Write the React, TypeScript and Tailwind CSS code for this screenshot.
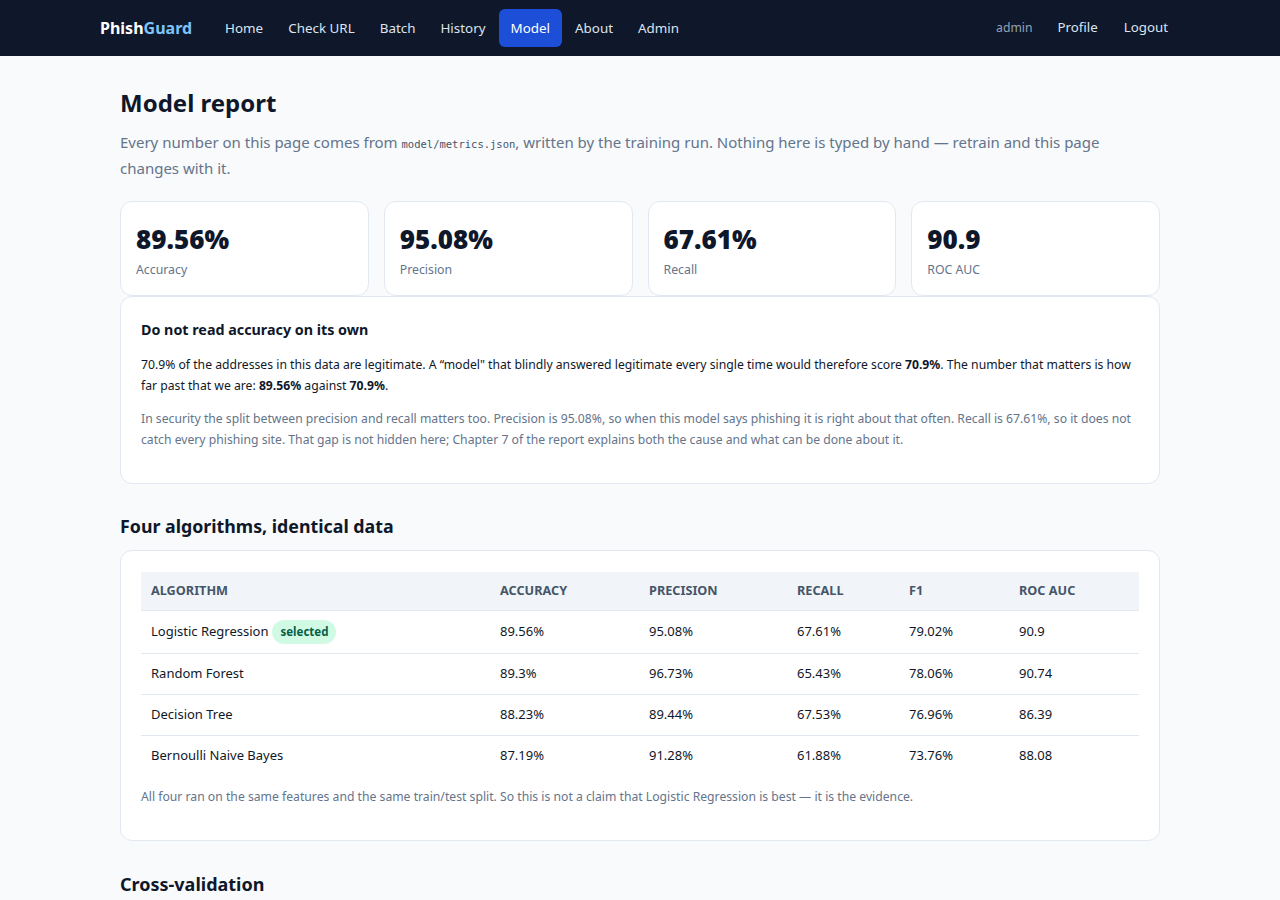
import React from "react";

const navLinks = ["Home", "Check URL", "Batch", "History", "Model", "About", "Admin"];

const metrics = [
  { value: "89.56%", label: "Accuracy" },
  { value: "95.08%", label: "Precision" },
  { value: "67.61%", label: "Recall" },
  { value: "90.9", label: "ROC AUC" },
];

const rows = [
  { name: "Logistic Regression", selected: true, acc: "89.56%", prec: "95.08%", rec: "67.61%", f1: "79.02%", auc: "90.9" },
  { name: "Random Forest", acc: "89.3%", prec: "96.73%", rec: "65.43%", f1: "78.06%", auc: "90.74" },
  { name: "Decision Tree", acc: "88.23%", prec: "89.44%", rec: "67.53%", f1: "76.96%", auc: "86.39" },
  { name: "Bernoulli Naive Bayes", acc: "87.19%", prec: "91.28%", rec: "61.88%", f1: "73.76%", auc: "88.08" },
];

export default function App() {
  return (
    <div className="min-h-screen bg-[#f8fafc] text-[#0f172a] font-['Noto_Sans',sans-serif]">
      {/* top nav */}
      <nav className="bg-[#0f172a] h-14">
        <div className="max-w-[1080px] mx-auto h-full flex items-center">
          <div className="text-[16px] font-bold mr-[21px]">
            <span className="text-white">Phish</span>
            <span className="text-[#7cc4fa]">Guard</span>
          </div>
          <div className="flex items-center gap-[1px]">
            {navLinks.map((l) => (
              <a
                key={l}
                className={
                  l === "Model"
                    ? "px-3 h-[38px] flex items-center rounded-md bg-[#1d4ed8] text-white text-[13.4px]"
                    : "px-3 h-[38px] flex items-center rounded-md text-[#dbe4f0] text-[13.4px]"
                }
              >
                {l}
              </a>
            ))}
          </div>
          <div className="ml-auto flex items-center">
            <span className="text-[#94a3b8] text-[12.2px] mr-[13px]">admin</span>
            <a className="px-3 py-2 text-[#dbe4f0] text-[13.3px]">Profile</a>
            <a className="ml-[2px] px-3 py-2 text-[#dbe4f0] text-[13.3px]">Logout</a>
          </div>
        </div>
      </nav>

      <main className="max-w-[1040px] mx-auto pt-[29px]">
        <h1 className="text-[24px] font-bold leading-[36px]">Model report</h1>
        <p className="mt-[8px] text-[15px] leading-[26px] text-[#64748b]">
          Every number on this page comes from{" "}
          <code className="font-['DejaVu_Sans_Mono',monospace] text-[10.5px] leading-none text-[#475569]">
            model/metrics.json
          </code>
          , written by the training run. Nothing here is typed by hand — retrain and this page changes with it.
        </p>

        <div className="grid grid-cols-4 gap-[15px] mt-[20px]">
          {metrics.map((m) => (
            <div key={m.label} className="bg-white border border-[#e2e8f0] rounded-xl px-[15px] pt-[20px] pb-[15px] h-[95px]">
              <div className="text-[26px] font-black leading-[34px] text-[#0f172a]">{m.value}</div>
              <div className="text-[12.3px] text-[#64748b] mt-[5px]">{m.label}</div>
            </div>
          ))}
        </div>

        <div className="bg-white border border-[#e2e8f0] rounded-xl px-[20px] pt-[22px] pb-[33px]">
          <h3 className="text-[14.3px] font-bold leading-[22px]">Do not read accuracy on its own</h3>
          <p className="mt-[13px] text-[12.2px] leading-[21px] text-[#0f172a]">
            70.9% of the addresses in this data are legitimate. A “model" that blindly answered legitimate every single
            time would therefore score <b>70.9%</b>. The number that matters is how far past that we are:{" "}
            <b>89.56%</b> against <b>70.9%</b>.
          </p>
          <p className="mt-[12px] text-[12.2px] leading-[21px] text-[#64748b]">
            In security the split between precision and recall matters too. Precision is 95.08%, so when this model says
            phishing it is right about that often. Recall is 67.61%, so it does not catch every phishing site. That gap is
            not hidden here; Chapter 7 of the report explains both the cause and what can be done about it.
          </p>
        </div>

        <h2 className="mt-[28px] text-[17.8px] font-bold leading-[28px]">Four algorithms, identical data</h2>
        <div className="mt-[10px] bg-white border border-[#e2e8f0] rounded-xl px-[20px] pt-[21px] pb-[33px]">
          <table className="w-full text-[13px] border-collapse">
            <thead>
              <tr className="bg-[#f1f5f9] text-[#475569] text-left text-[12.7px]">
                <th className="w-[349px] px-[10px] h-[38px] font-bold">ALGORITHM</th>
                <th className="w-[149px] px-[10px] font-bold">ACCURACY</th>
                <th className="w-[148px] px-[10px] font-bold">PRECISION</th>
                <th className="w-[112px] px-[10px] font-bold">RECALL</th>
                <th className="w-[110px] px-[10px] font-bold">F1</th>
                <th className="px-[10px] font-bold">ROC AUC</th>
              </tr>
            </thead>
            <tbody>
              {rows.map((r, i) => (
                <tr key={r.name} className="border-t border-[#e2e8f0]">
                  <td className={i === 0 ? "px-[10px] h-[43px]" : "px-[10px] h-[41px]"}>
                    {r.name}
                    {r.selected && (
                      <span className="ml-[4px] inline-block rounded-full bg-[#d1fae5] text-[#065f46] text-[11.5px] font-bold px-[8px] py-[2px] leading-[20px]">
                        selected
                      </span>
                    )}
                  </td>
                  <td className="px-[10px]">{r.acc}</td>
                  <td className="px-[10px]">{r.prec}</td>
                  <td className="px-[10px]">{r.rec}</td>
                  <td className="px-[10px]">{r.f1}</td>
                  <td className="px-[10px]">{r.auc}</td>
                </tr>
              ))}
            </tbody>
          </table>
          <p className="mt-[11px] text-[12.2px] leading-[20px] text-[#64748b]">
            All four ran on the same features and the same train/test split. So this is not a claim that Logistic
            Regression is best — it is the evidence.
          </p>
        </div>

        <h2 className="mt-[29px] text-[18px] font-bold leading-[28px]">Cross-validation</h2>
        <div className="h-[200px]" />
      </main>
    </div>
  );
}
